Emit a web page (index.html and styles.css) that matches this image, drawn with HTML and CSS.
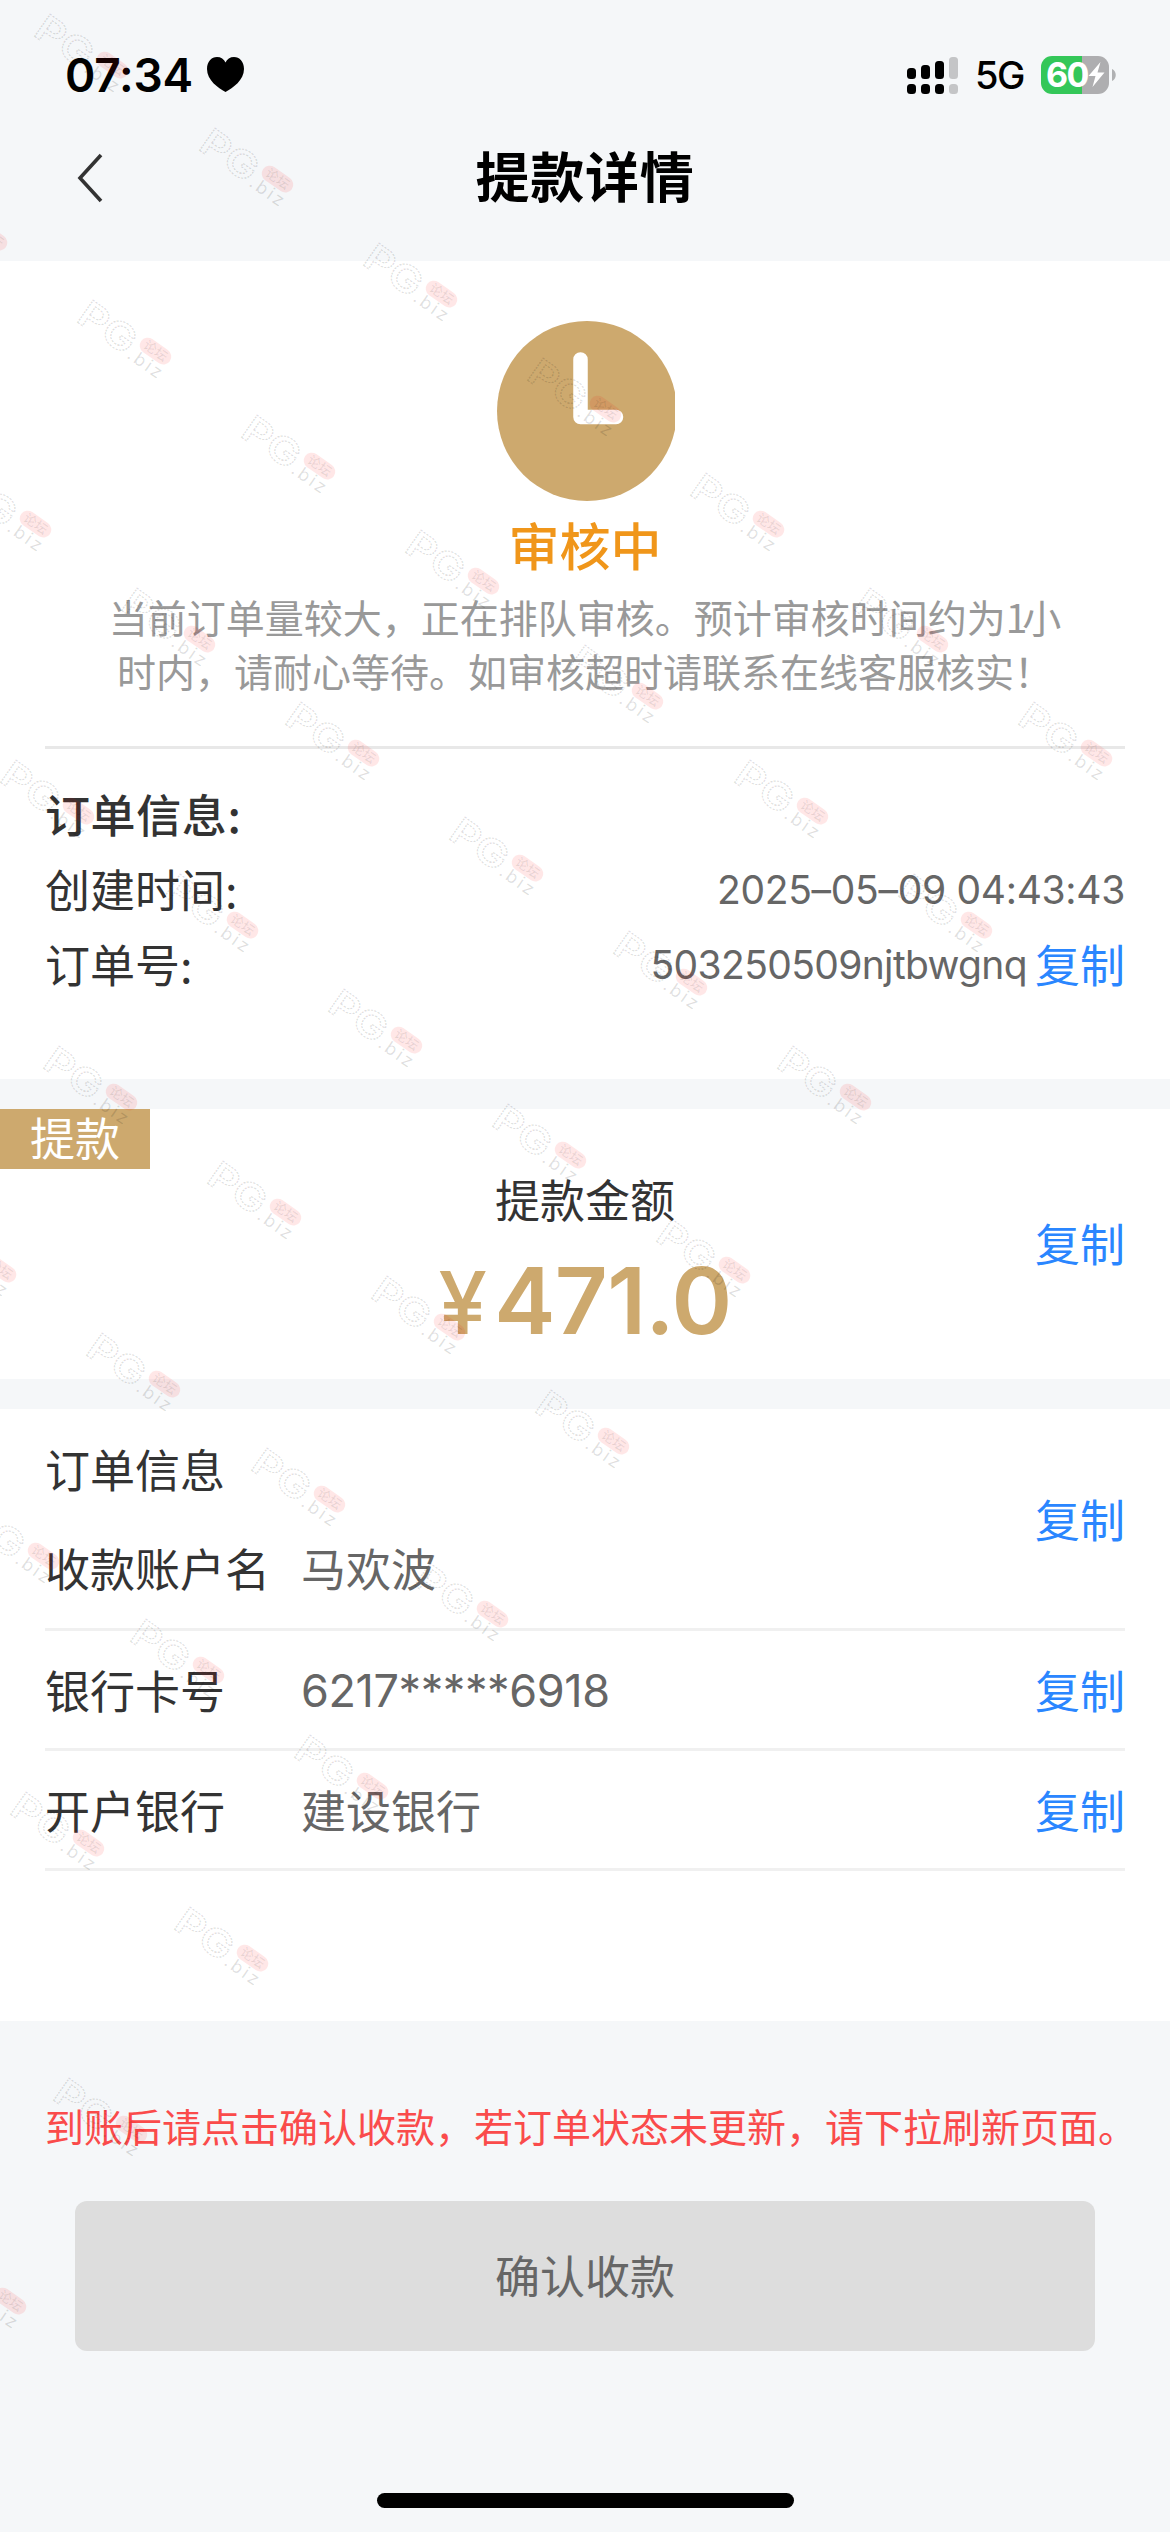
FILE: index.html
```html
<!DOCTYPE html>
<html lang="zh-CN">
<head>
<meta charset="utf-8">
<title>提款详情</title>
<link rel="stylesheet" href="styles.css">
</head>
<body>
<div class="page">
  <header class="header">
    <div class="status">
      <span class="status-time">07:34</span>
      <svg class="heart" width="37" height="35" viewBox="0 0 37 35"><path d="M18.500 35C11 31 0 23 0 12C0 4.500 4.500 0 10 0C14 0 17 2 18.500 5.500C20 2 23 0 27 0C32.500 0 37 4.500 37 12C37 23 26 31 18.500 35Z"/></svg>
      <div class="status-right">
        <svg width="52" height="38" viewBox="0 0 52 38">
          <rect x="0" y="12" width="9" height="11" rx="3.500"/><rect x="14" y="9" width="9" height="14" rx="3.500"/><rect x="28" y="5" width="9" height="18" rx="3.500"/>
          <rect x="0" y="28" width="9" height="10" rx="3.500"/><rect x="14" y="28" width="9" height="10" rx="3.500"/><rect x="28" y="28" width="9" height="10" rx="3.500"/>
          <rect x="42" y="1" width="9" height="22" rx="3.500" fill="#c4c5c7"/><rect x="42" y="28" width="9" height="10" rx="3.500" fill="#c4c5c7"/>
        </svg>
        <span class="network">5G</span>
        <div class="battery">
          <span class="battery-level">60</span>
          <svg class="bolt" width="17" height="25" viewBox="0 0 17 25"><path d="M12.500 0L0.500 14H7.500L4.500 25L16.500 10.500H9.500Z" fill="#fff"/></svg>
        </div>
        <svg class="nub" width="4" height="12" viewBox="0 0 4 12"><path d="M0 0C5 2 5 10 0 12Z" fill="#b0b1b3"/></svg>
      </div>
    </div>
    <nav class="nav">
      <svg class="back" width="26" height="50" viewBox="0 0 26 50"><path d="M24 2L3 25L24 48" fill="none" stroke="#333" stroke-width="3.600"/></svg>
      <h1 class="title">提款详情</h1>
    </nav>
  </header>

  <section class="card review">
    <svg class="clock" width="178" height="180" viewBox="0 0 178 180"><circle cx="90" cy="90" r="90" fill="#cda96e"/><path d="M83.500 38.500V96H119" fill="none" stroke="#fff" stroke-width="14.500" stroke-linecap="round" stroke-linejoin="round"/></svg>
    <div class="state">审核中</div>
    <p class="desc">当前订单量较大，正在排队审核。预计审核时间约为<span class="one">1</span>小<br>时内，请耐心等待。如审核超时请联系在线客服核实！</p>
    <div class="order">
      <div class="line strong">订单信息:</div>
      <div class="line"><span>创建时间:</span><span class="num date">2025–05–09 04:43:43</span></div>
      <div class="line"><span>订单号:</span><span class="pair"><span class="num orderno">503250509njtbwgnq</span><a class="copy">复制</a></span></div>
    </div>
  </section>

  <section class="card amount">
    <span class="tag">提款</span>
    <div class="amount-body">
      <div class="amount-label">提款金额</div>
      <div class="amount-value"><span class="yen">¥</span>471.0</div>
    </div>
    <a class="copy">复制</a>
  </section>

  <section class="card account">
    <div class="row tall">
      <div class="stack">
        <div class="cell">订单信息</div>
        <div class="cell"><span class="label">收款账户名</span><span class="value">马欢波</span></div>
      </div>
      <a class="copy">复制</a>
    </div>
    <div class="row"><span class="label">银行卡号</span><span class="value num cardno">6217*****6918</span><a class="copy">复制</a></div>
    <div class="row"><span class="label">开户银行</span><span class="value">建设银行</span><a class="copy">复制</a></div>
  </section>

  <footer class="footer">
    <p class="notice">到账后请点击确认收款，若订单状态未更新，请下拉刷新页面。</p>
    <button class="confirm">确认收款</button>
    <div class="home"></div>
  </footer>

  <svg class="watermark" width="1170" height="2532" viewBox="0 0 1170 2532">
    <defs>
      <g id="mark">
        <g transform="rotate(35)">
          <text class="wm-big" x="-3" y="27" textLength="62" lengthAdjust="spacingAndGlyphs">PG</text>
          <rect x="63" y="-2" width="35" height="16" rx="8" fill="#f00" fill-opacity=".095"/>
          <text class="wm-cn" x="67.500" y="10.500">论坛</text>
          <text class="wm-biz" x="60" y="28" textLength="38">.biz</text>
        </g>
      </g>
    </defs>
    <use href="#mark" x="50" y="14"/><use href="#mark" x="215" y="128"/><use href="#mark" x="379" y="243"/><use href="#mark" x="543" y="358"/><use href="#mark" x="706" y="473"/><use href="#mark" x="870" y="588"/><use href="#mark" x="1034" y="702"/>
    <use href="#mark" x="-71" y="186"/><use href="#mark" x="93" y="300"/><use href="#mark" x="257" y="415"/><use href="#mark" x="421" y="530"/><use href="#mark" x="585" y="645"/><use href="#mark" x="750" y="760"/><use href="#mark" x="914" y="874"/>
    <use href="#mark" x="-27" y="473"/><use href="#mark" x="137" y="588"/><use href="#mark" x="301" y="702"/><use href="#mark" x="465" y="817"/><use href="#mark" x="629" y="931"/><use href="#mark" x="793" y="1046"/>
    <use href="#mark" x="16" y="760"/><use href="#mark" x="180" y="874"/><use href="#mark" x="344" y="989"/><use href="#mark" x="508" y="1104"/><use href="#mark" x="672" y="1219"/>
    <use href="#mark" x="59" y="1046"/><use href="#mark" x="223" y="1161"/><use href="#mark" x="387" y="1276"/><use href="#mark" x="551" y="1390"/>
    <use href="#mark" x="-62" y="1218"/><use href="#mark" x="102" y="1333"/><use href="#mark" x="267" y="1448"/><use href="#mark" x="430" y="1563"/>
    <use href="#mark" x="-19" y="1505"/><use href="#mark" x="146" y="1619"/><use href="#mark" x="310" y="1735"/>
    <use href="#mark" x="26" y="1792"/><use href="#mark" x="190" y="1907"/><use href="#mark" x="69" y="2078"/><use href="#mark" x="-52" y="2250"/>
  </svg>
</div>
</body>
</html>
```
FILE: styles.css
```css
* { box-sizing: border-box; margin: 0; padding: 0; }
body {
  width: 1170px;
  font-family: "Noto Sans CJK SC", sans-serif;
  font-size: 45px;
  color: #333;
  background: #f5f7f9;
}
.page {
  position: relative;
  display: flex;
  flex-direction: column;
  width: 1170px;
  height: 2532px;
  overflow: hidden;
}
.header { height: 261px; flex: none; }
.status {
  display: flex;
  align-items: center;
  height: 149px;
  padding: 0 54px 0 65px;
  font-family: Inter, sans-serif;
  color: #000;
}
.status-time { width: 142px; font-size: 46px; font-weight: 600; letter-spacing: -0.2px; white-space: nowrap; }
.status-right { display: flex; align-items: center; margin-left: auto; }
.network { width: 66px; margin-left: 16px; font-size: 38px; font-weight: 500; letter-spacing: -1.5px; }
.battery {
  display: flex;
  align-items: center;
  width: 68px;
  height: 38px;
  padding-left: 5px;
  border-radius: 11px;
  background: linear-gradient(90deg, #34c759 41px, #aeaeb0 41px);
}
.battery-level { width: 42px; font-size: 34px; line-height: 38px; font-weight: 700; letter-spacing: -1.5px; color: #fff; }
.bolt { flex: none; }
.nub { margin-left: 3px; }
.nav { display: flex; align-items: center; height: 58px; padding: 0 77px; }
.title { flex: 1; margin-right: 26px; padding-bottom: 6px; text-align: center; font-size: 54px; line-height: 52px; font-weight: 700; letter-spacing: 0.7px; color: #000; }
.card { flex: none; background: #fff; }

.review { display: flex; flex-direction: column; align-items: center; height: 818px; padding: 60px 45px 0; }
.clock { flex: none; margin-left: 2px; }
.state { margin-top: 13px; font-size: 51px; line-height: 60px; font-weight: 500; color: #f0961a; }
.desc { margin-top: 15px; padding-bottom: 49px; font-size: 39px; line-height: 54px; color: #999; text-align: center; white-space: nowrap; }
.one { letter-spacing: -5px; }
.order { align-self: stretch; padding-top: 28px; border-top: 3px solid #e8e8e8; }
.line { display: flex; justify-content: space-between; align-items: center; height: 75px; padding-bottom: 1px; line-height: 74px; }
.strong { font-weight: 500; letter-spacing: 0.6px; }
.num { font-family: Inter, sans-serif; color: #666; white-space: nowrap; }
.date { padding-top: 2px; font-size: 39px; letter-spacing: -0.3px; }
.orderno { padding-top: 2px; font-size: 39px; letter-spacing: -0.65px; }
.cardno { padding-top: 3px; letter-spacing: -0.4px; }
.pair { display: flex; align-items: center; gap: 8px; }
.copy { color: #2a86ff; }

.amount {
  display: grid;
  grid-template-columns: 150px 1fr 150px;
  height: 270px;
  margin-top: 30px;
}
.tag { height: 60px; line-height: 56px; text-align: center; color: #fff; background: #cda96e; }
.amount-body { padding-top: 60px; text-align: center; }
.amount-label { height: 60px; line-height: 59px; }
.amount-value { font-family: Inter, sans-serif; font-size: 92px; line-height: 143px; font-weight: 600; letter-spacing: -0.7px; color: #cda96e; }
.yen { margin-right: 8px; font-size: 87px; font-weight: 500; }
.amount .copy { align-self: center; justify-self: end; margin-right: 45px; padding-bottom: 4px; }

.account { height: 612px; margin-top: 30px; padding: 0 45px; }
.row { display: flex; align-items: center; height: 120px; padding-bottom: 1px; border-bottom: 3px solid #f0f0f0; }
.tall { height: 222px; padding-bottom: 0; }
.stack { display: flex; flex-direction: column; }
.cell { display: flex; height: 99px; line-height: 97px; }
.label { width: 256px; }
.value { color: #666; }
.row .copy { margin-left: auto; }

.footer { display: flex; flex-direction: column; flex: 1; padding: 75px 45px 24px; }
.notice { height: 60px; font-size: 39px; line-height: 58px; white-space: nowrap; color: #fa4b4b; }
.confirm {
  height: 150px;
  margin: 45px 30px 0;
  padding-bottom: 4px;
  border: 0;
  border-radius: 12px;
  font: inherit;
  color: #666;
  background: #ddd;
}
.home { width: 417px; height: 15px; margin: auto auto 0; border-radius: 8px; background: #000; }

.watermark { position: absolute; left: 0; top: 0; pointer-events: none; }
.wm-big { font: 600 37px Inter, sans-serif; fill: none; stroke: #000; stroke-opacity: 0.13; stroke-width: 1.3px; stroke-dasharray: 2 1; }
.wm-cn { font: 500 13px "Noto Sans CJK SC", sans-serif; fill: #000; fill-opacity: 0.09; }
.wm-biz { font: 400 18px Inter, sans-serif; fill: #000; fill-opacity: 0.12; }
```
